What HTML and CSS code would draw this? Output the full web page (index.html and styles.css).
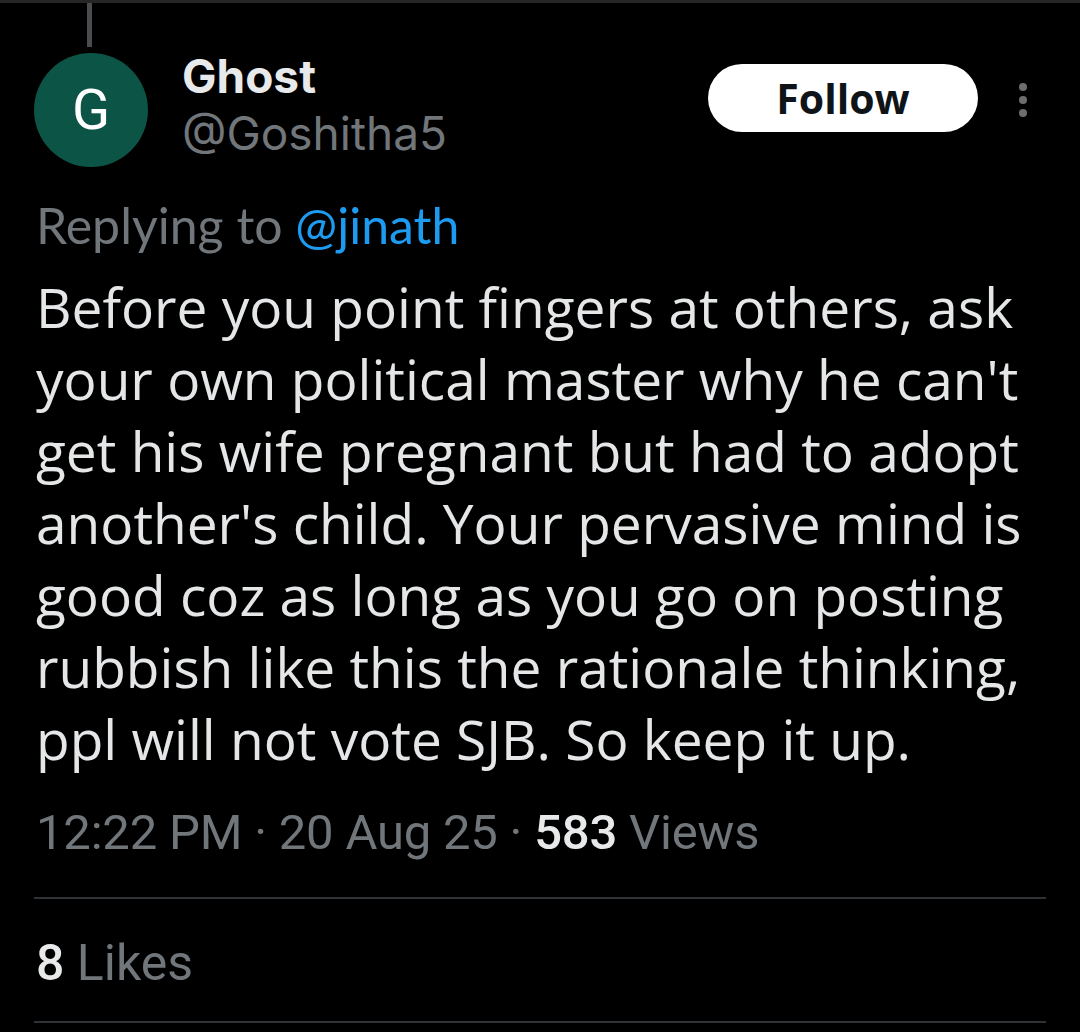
FILE: index.html
```html
<!DOCTYPE html>
<html lang="en">

<head>
    <meta charset="UTF-8">
    <meta name="viewport" content="width=device-width, initial-scale=1.0">
    <title>Post</title>
    <link rel="stylesheet" href="styles.css">
</head>

<body>
    <div class="top-rule"></div>
    <div class="tweet">
        <div class="thread-line"></div>
        <div class="tweet-header">
            <div class="avatar">G</div>
            <div class="user-info">
                <div class="display-name">Ghost</div>
                <div class="handle">@Goshitha5</div>
            </div>
            <button class="follow-btn">Follow</button>
            <div class="more">
                <span></span><span></span><span></span>
            </div>
        </div>

        <div class="replying">Replying to <span class="mention">@jinath</span></div>

        <!-- keep the app's line breaks -->
        <p class="tweet-text">Before you point fingers at others, ask<br>
            your own political master why he can't<br>
            get his wife pregnant but had to adopt<br>
            another's child. Your pervasive mind is<br>
            good coz as long as you go on posting<br>
            rubbish like this the rationale thinking,<br>
            ppl will not vote SJB. So keep it up.</p>

        <div class="meta">12:22 PM · 20 Aug 25 · <b>583</b> Views</div>

        <div class="stats">
            <span><b>8</b> Likes</span>
        </div>
    </div>
</body>

</html>
```

FILE: styles.css
```css
body {
    margin: 0;
    background-color: #000;
    color: #e7e9ea;
    font-family: "Open Sans", sans-serif;
    overflow: hidden;
}

.top-rule {
    height: 3px;
    background-color: #262626;
}

.tweet {
    padding: 0 34px 0 34px;
}

.thread-line {
    width: 5px;
    height: 44px;
    margin-left: 53px;
    background-color: #4a4d50;
}

.tweet-header {
    display: flex;
    align-items: flex-start;
    margin-top: 6px;
}

.avatar {
    width: 114px;
    height: 114px;
    border-radius: 50%;
    background-color: #0c5446;
    color: #fff;
    font-family: "Roboto", sans-serif;
    font-size: 56px;
    display: flex;
    align-items: center;
    justify-content: center;
    flex-shrink: 0;
}

.user-info {
    margin-left: 34px;
    flex: 1;
    margin-top: -4px;
}

.display-name {
    font-family: "Inter", sans-serif;
    font-weight: 700;
    font-size: 46px;
    line-height: 54px;
    color: #e7e9ea;
}

.handle {
    font-family: "Inter", sans-serif;
    color: #71767b;
    font-size: 46px;
    line-height: 60px;
}

.follow-btn {
    margin-top: 11px;
    width: 270px;
    height: 68px;
    border: none;
    border-radius: 34px;
    background-color: #fff;
    color: #0f1419;
    font-family: "Open Sans", sans-serif;
    font-weight: bold;
    font-size: 41px;
    padding: 0;
}

.more {
    display: flex;
    flex-direction: column;
    gap: 5px;
    margin: 30px 19px 0 41px;
}

.more span {
    width: 8px;
    height: 8px;
    border-radius: 50%;
    background-color: #6e6e6e;
}

.replying {
    margin-top: 26px;
    font-family: "Lato", sans-serif;
    font-size: 50px;
    line-height: 64px;
    color: #71767b;
    padding-left: 2px;
}

.mention {
    color: #1d9bf0;
}

.tweet-text {
    margin: 14px 0 0 2px;
    font-size: 55px;
    line-height: 72px;
    color: #e4e6e7;
    white-space: nowrap;
}

.meta {
    margin-top: 28px;
    font-family: "Roboto", sans-serif;
    font-size: 49px;
    line-height: 60px;
    color: #71767b;
    padding-left: 2px;
    letter-spacing: -0.2px;
}

.meta b {
    color: #e7e9ea;
    font-weight: 500;
}

.stats {
    margin-top: 34px;
    border-top: 2px solid #2f3336;
    border-bottom: 2px solid #2f3336;
    padding: 36px 2px 30px;
    font-family: "Roboto", sans-serif;
    font-size: 50px;
    line-height: 56px;
    color: #71767b;
}

.stats b {
    color: #e7e9ea;
    font-weight: 500;
}
```
